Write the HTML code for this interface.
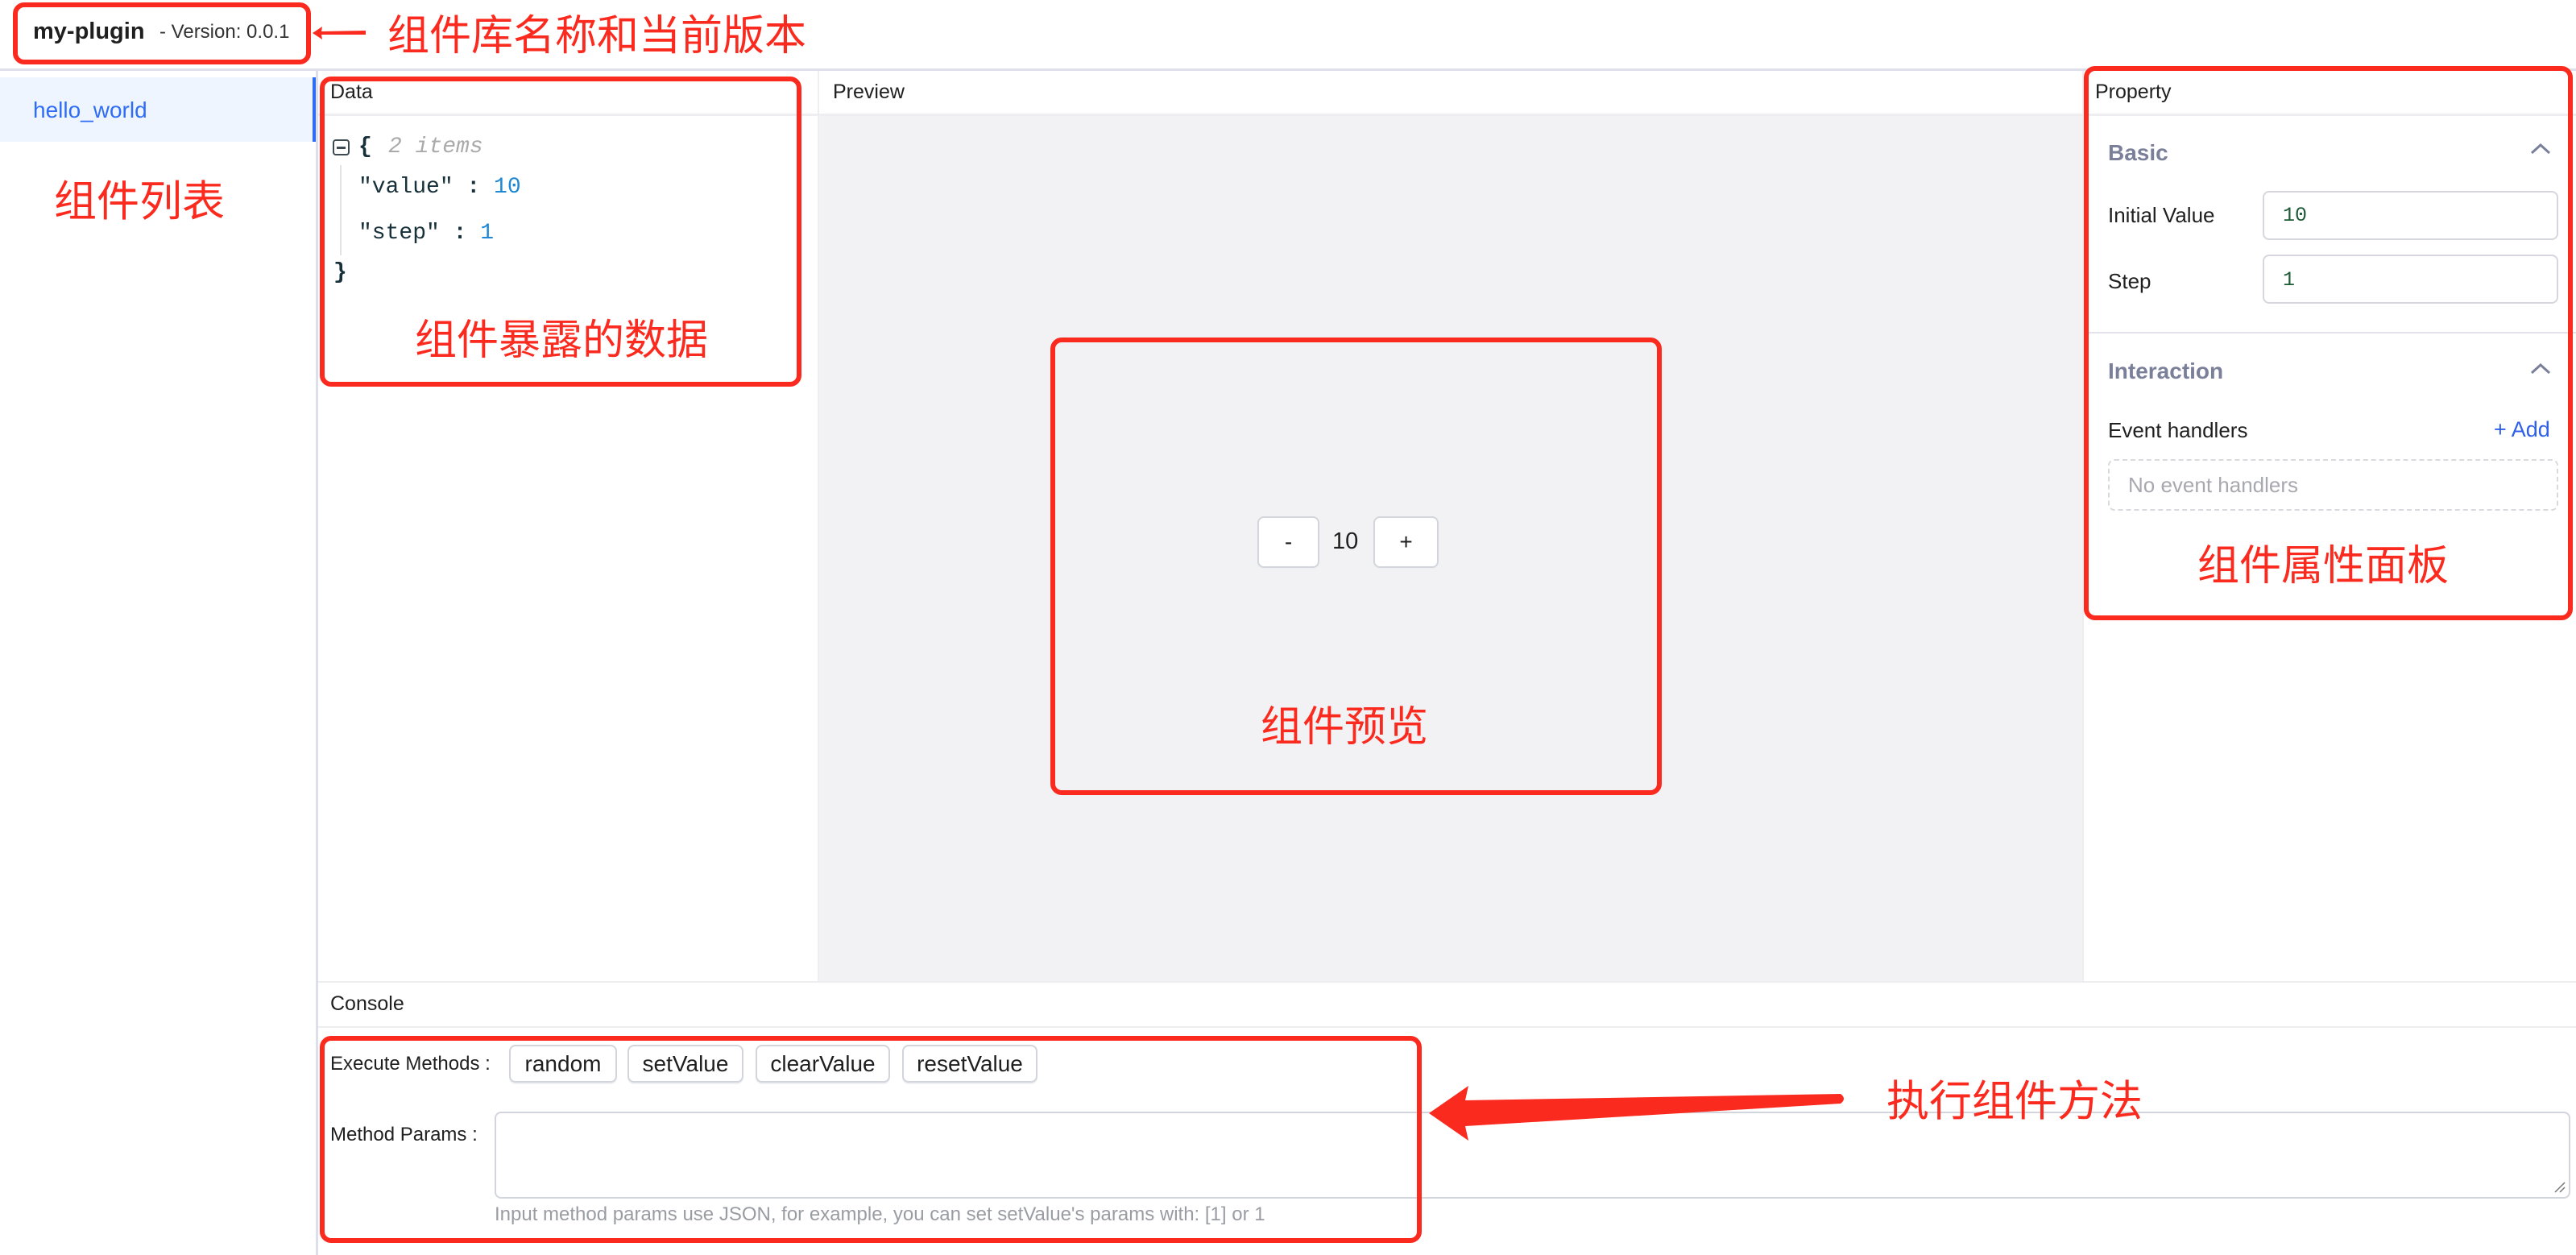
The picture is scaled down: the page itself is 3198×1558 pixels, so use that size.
<!DOCTYPE html>
<html><head><meta charset="utf-8">
<style>
*{box-sizing:border-box;margin:0;padding:0}
body{width:3198px;height:1558px;position:relative;overflow:hidden;background:#fff;font-family:"Liberation Sans","Noto Sans CJK SC",sans-serif;color:#1f1f1f}
.a{position:absolute}
.red{position:absolute;border:6px solid #fb2a1f;border-radius:14px}
.cn{position:absolute;color:#fb2a1f;font-family:"Noto Sans CJK SC",sans-serif;white-space:nowrap;line-height:1}
.mono{font-family:"Liberation Mono",monospace}
.t26{font-size:25px;line-height:1}
.btn{position:absolute;border:2px solid #d3d5dc;border-radius:8px;background:#fff;font-size:28px;display:flex;align-items:center;justify-content:center;box-shadow:0 2px 0 #eef0f3}
</style></head><body>
<!-- header -->
<div class="a" style="left:0;top:85px;width:3198px;height:3px;background:#dde0ea"></div>
<div class="a" style="left:41px;top:24px;font-size:29px;font-weight:bold;line-height:30px">my-plugin</div>
<div class="a" style="left:198px;top:27px;font-size:24px;line-height:26px;color:#333">- Version: 0.0.1</div>
<div class="red" style="left:16px;top:3px;width:370px;height:77px"></div>
<svg class="a" style="left:386px;top:30px" width="70" height="22"><polygon points="2,11 14,3 13,9 68,8 68,13 13,13 14,19" fill="#fb2a1f"/></svg>
<div class="cn" style="left:481px;top:14px;font-size:52px">组件库名称和当前版本</div>

<!-- sidebar -->
<div class="a" style="left:0;top:96px;width:389px;height:80px;background:#eef5fe"></div>
<div class="a" style="left:388px;top:96px;width:4px;height:80px;background:#2f6df5"></div>
<div class="a" style="left:41px;top:122px;font-size:28px;color:#2f6df5;line-height:30px">hello_world</div>
<div class="a" style="left:392px;top:88px;width:3px;height:1470px;background:#dde0ea"></div>
<div class="cn" style="left:67px;top:220px;font-size:53px">组件列表</div>

<!-- data panel -->
<div class="a" style="left:1015px;top:88px;width:2px;height:1132px;background:#eeeef1"></div>
<div class="a" style="left:395px;top:141px;width:2803px;height:3px;background:#eeeef1"></div>
<div class="a t26" style="left:410px;top:102px">Data</div>
<div class="a" style="left:413px;top:173px;width:21px;height:20px;border:2.5px solid #3d4a52;border-radius:4px"></div>
<div class="a" style="left:418px;top:182px;width:11px;height:2.5px;background:#3d4a52"></div>
<div class="a mono" style="left:445px;top:168px;font-size:28px;line-height:30px;font-weight:bold;color:#173039">{</div>
<div class="a mono" style="left:482px;top:168px;font-size:28px;line-height:30px;font-style:italic;color:#aaa">2 items</div>
<div class="a" style="left:422px;top:205px;width:2px;height:112px;background:#e2e2e2"></div>
<div class="a mono" style="left:445px;top:218px;font-size:28px;line-height:30px;color:#173039">"value" <b>:</b> <span style="color:#1e88d4">10</span></div>
<div class="a mono" style="left:445px;top:275px;font-size:28px;line-height:30px;color:#173039">"step" <b>:</b> <span style="color:#1e88d4">1</span></div>
<div class="a mono" style="left:414px;top:324px;font-size:28px;line-height:30px;font-weight:bold;color:#173039">}</div>
<div class="red" style="left:397px;top:95px;width:598px;height:385px"></div>
<div class="cn" style="left:515px;top:392px;font-size:52px">组件暴露的数据</div>

<!-- preview -->
<div class="a t26" style="left:1034px;top:102px">Preview</div>
<div class="a" style="left:1017px;top:144px;width:1568px;height:1075px;background:#f2f2f5"></div>
<div class="btn" style="left:1561px;top:641px;width:77px;height:64px">-</div>
<div class="a" style="left:1654px;top:656px;font-size:29px;line-height:32px">10</div>
<div class="btn" style="left:1705px;top:641px;width:81px;height:64px">+</div>
<div class="red" style="left:1304px;top:419px;width:759px;height:568px"></div>
<div class="cn" style="left:1565px;top:872px;font-size:52px">组件预览</div>

<!-- property -->
<div class="a" style="left:2585px;top:88px;width:2px;height:1132px;background:#eeeef1"></div>
<div class="a" style="left:2587px;top:144px;width:611px;height:1075px;background:#fff"></div>
<div class="a t26" style="left:2601px;top:102px">Property</div>
<div class="a" style="left:2617px;top:175px;font-size:28px;font-weight:bold;color:#7a7f9a;line-height:30px">Basic</div>
<svg class="a" style="left:3141px;top:177px" width="26" height="16"><path d="M2 13 L13 3 L24 13" fill="none" stroke="#7a7f9a" stroke-width="3"/></svg>
<div class="a" style="left:2617px;top:253px;font-size:26px;line-height:28px">Initial Value</div>
<div class="a" style="left:2809px;top:237px;width:367px;height:61px;border:2px solid #d6d7de;border-radius:8px"></div>
<div class="a mono" style="left:2834px;top:254px;font-size:25px;color:#1d5a36;line-height:28px">10</div>
<div class="a" style="left:2617px;top:335px;font-size:26px;line-height:28px">Step</div>
<div class="a" style="left:2809px;top:316px;width:367px;height:61px;border:2px solid #d6d7de;border-radius:8px"></div>
<div class="a mono" style="left:2834px;top:334px;font-size:25px;color:#1d5a36;line-height:28px">1</div>
<div class="a" style="left:2592px;top:412px;width:606px;height:2px;background:#e2e3ea"></div>
<div class="a" style="left:2617px;top:446px;font-size:28px;font-weight:bold;color:#7a7f9a;line-height:30px">Interaction</div>
<svg class="a" style="left:3141px;top:450px" width="26" height="16"><path d="M2 13 L13 3 L24 13" fill="none" stroke="#7a7f9a" stroke-width="3"/></svg>
<div class="a" style="left:2617px;top:520px;font-size:26px;line-height:28px">Event handlers</div>
<div class="a" style="left:3096px;top:518px;font-size:27px;color:#2f5fe8;line-height:30px">+ Add</div>
<div class="a" style="left:2617px;top:570px;width:559px;height:64px;border:2px dashed #d9d9de;border-radius:8px"></div>
<div class="a" style="left:2642px;top:588px;font-size:26px;color:#a8a8b0;line-height:28px">No event handlers</div>
<div class="red" style="left:2587px;top:82px;width:607px;height:688px"></div>
<div class="cn" style="left:2728px;top:672px;font-size:52px">组件属性面板</div>

<!-- console -->
<div class="a" style="left:395px;top:1218px;width:2803px;height:2px;background:#eeeef1"></div>
<div class="a" style="left:395px;top:1274px;width:2803px;height:2px;background:#eeeef1"></div>
<div class="a t26" style="left:410px;top:1234px">Console</div>
<div class="a" style="left:410px;top:1308px;font-size:24px;line-height:26px">Execute Methods :</div>
<div class="btn" style="left:632px;top:1297px;width:134px;height:47px">random</div>
<div class="btn" style="left:779px;top:1297px;width:144px;height:47px">setValue</div>
<div class="btn" style="left:938px;top:1297px;width:167px;height:47px">clearValue</div>
<div class="btn" style="left:1120px;top:1297px;width:168px;height:47px">resetValue</div>
<div class="a" style="left:410px;top:1396px;font-size:24px;line-height:26px">Method Params :</div>
<div class="a" style="left:614px;top:1380px;width:2577px;height:108px;border:2px solid #d3d5dc;border-radius:8px"></div>
<svg class="a" style="left:3170px;top:1466px" width="16" height="16"><path d="M2 14 L14 2 M8 14 L14 8" stroke="#777" stroke-width="1.5"/></svg>
<div class="a" style="left:614px;top:1495px;font-size:24px;color:#9a9ca3;line-height:26px">Input method params use JSON, for example, you can set setValue's params with: [1] or 1</div>
<div class="red" style="left:397px;top:1286px;width:1368px;height:257px"></div>
<svg class="a" style="left:1765px;top:1340px" width="540" height="80"><path d="M9 42 L58 8 L54 26 L520 18 Q528 24 520 30 L54 58 L58 76 Z" fill="#fb2a1f"/></svg>
<div class="cn" style="left:2342px;top:1337px;font-size:53px">执行组件方法</div>
</body></html>
